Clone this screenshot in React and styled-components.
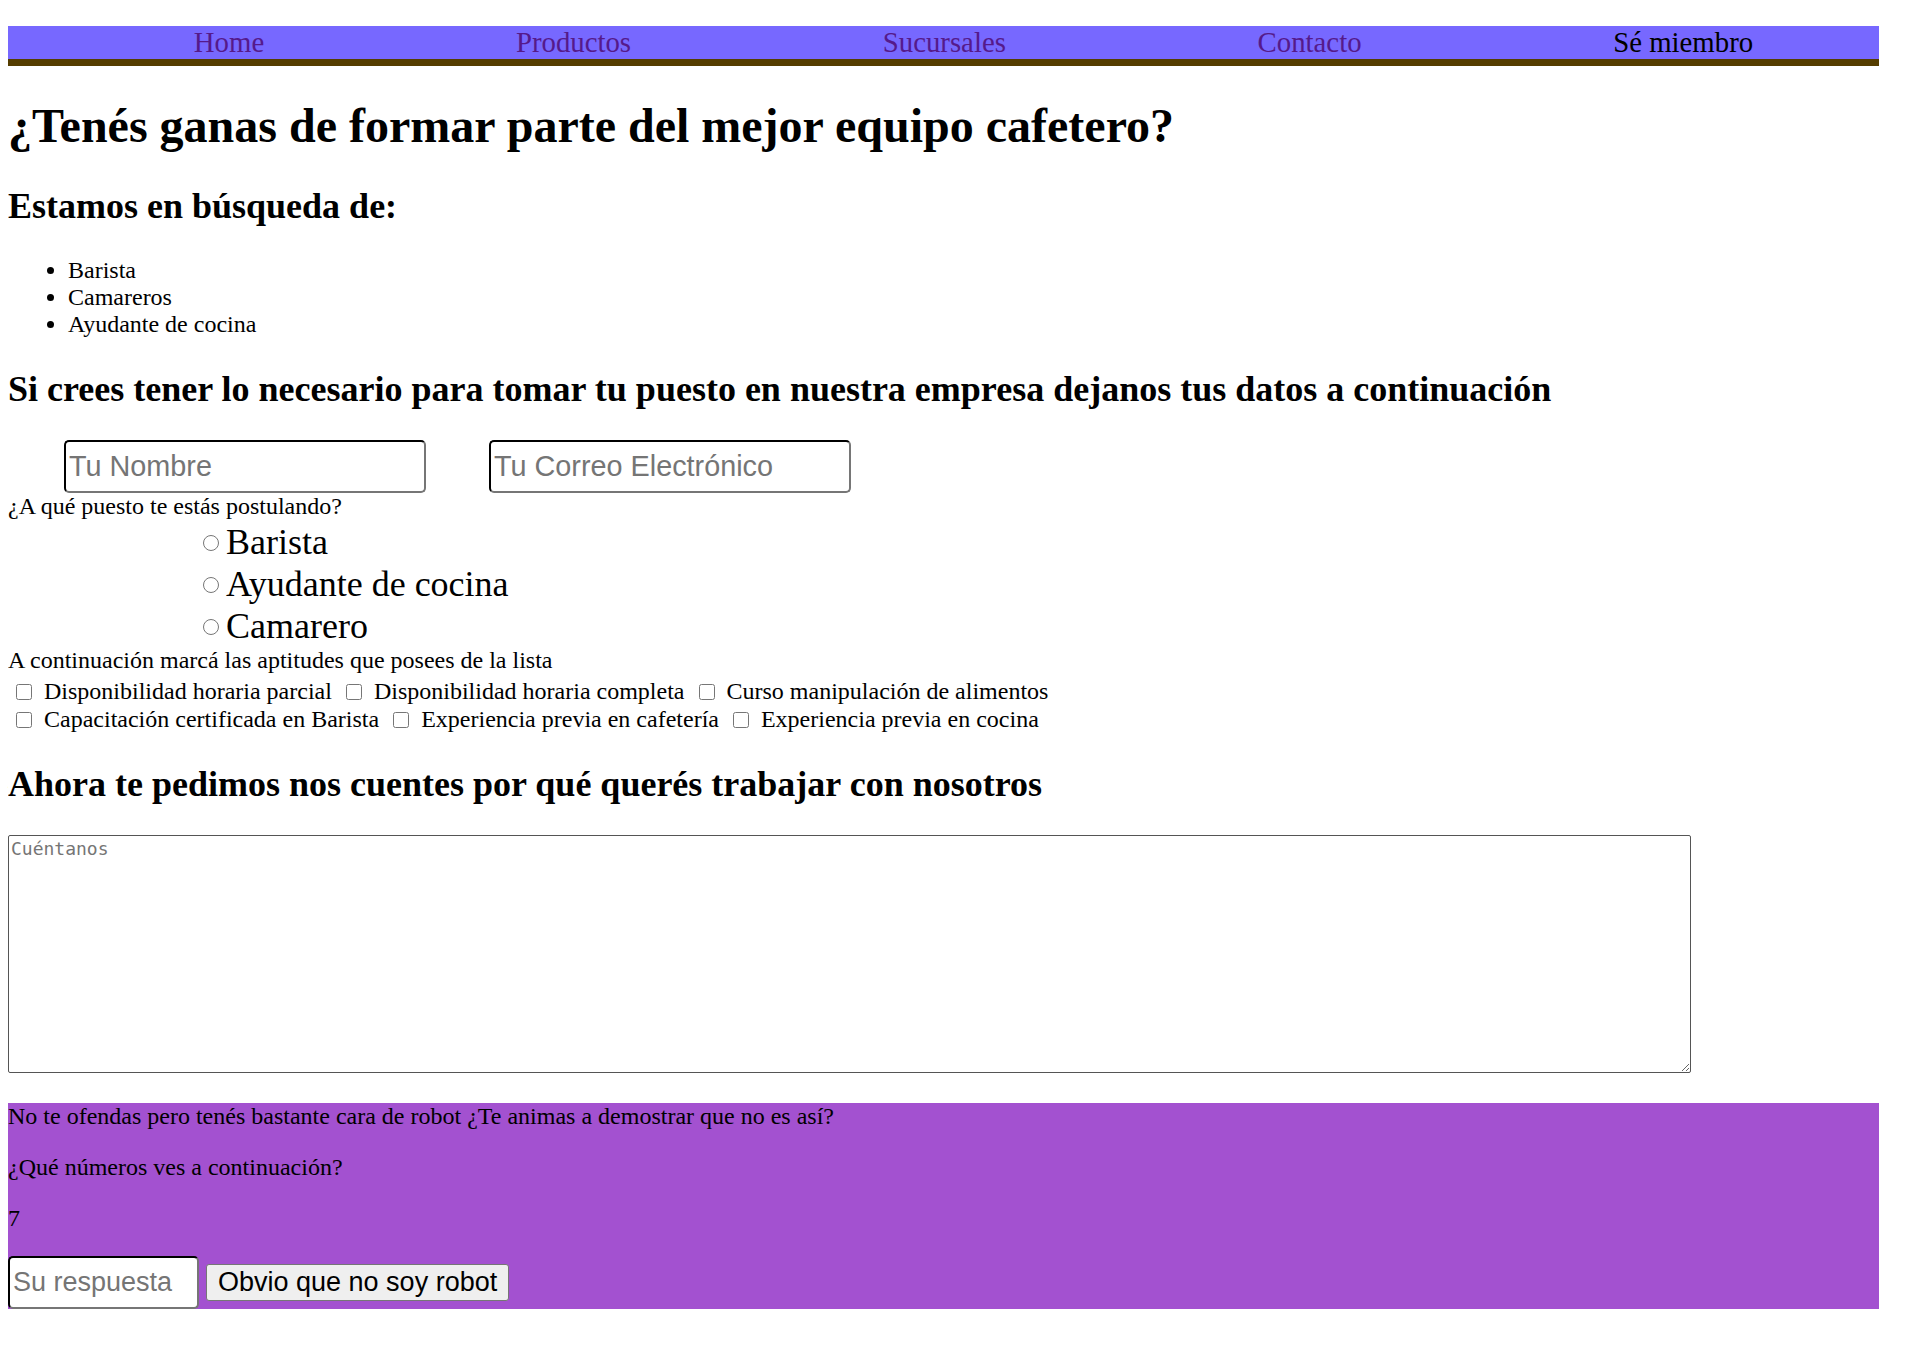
import React from "react";
import styled, { createGlobalStyle } from "styled-components";

const GlobalStyle = createGlobalStyle`
  body {
    margin: 8px;
    font-family: "Liberation Serif", "Times New Roman", serif;
    font-size: 24px;
    color: #000;
    background: #fff;
  }
`;

const Nav = styled.nav`
  display: flex;
  justify-content: space-around;
  width: 1871px;
  box-sizing: border-box;
  margin-top: 18px;
  padding-left: 60px;
  background: #7768ff;
  border-bottom: 7px solid #553d00;
  font-size: 28.8px;
  line-height: 33px;
`;

const NavLink = styled.a`
  color: ${props => (props.$plain ? "#000" : "#551a8b")};
  text-decoration: none;
`;

const Title = styled.h1`
  font-size: 48px;
  margin: 32px 0;
`;

const Subtitle = styled.h2`
  font-size: 36px;
  margin: 30px 0;
`;

const JobList = styled.ul`
  margin: 24px 0;
  padding-left: 60px;
`;

const Form = styled.form`
  margin: 0;
`;

const InputRow = styled.div`
  display: flex;
  gap: 63px;
  padding-left: 56px;
`;

const TextInput = styled.input`
  width: ${props => props.$width || "362px"};
  height: 53px;
  box-sizing: border-box;
  padding: 8px 3px;
  font-family: "Liberation Sans", Arial, sans-serif;
  font-size: ${props => props.$size || "28.8px"};
  border: 2px inset #767676;
  border-top-color: #333;
  border-left-color: #333;
  border-radius: 5px;
  background: #fff;
  &::placeholder {
    color: #757575;
  }
`;

const Question = styled.div`
  line-height: 27.6px;
`;

const RadioGroup = styled.div`
  padding-left: 190px;
`;

const RadioRow = styled.label`
  display: flex;
  align-items: center;
  height: 42px;
  font-size: 36px;
`;

const Radio = styled.input`
  width: 16px;
  height: 16px;
  margin: 3px 7px 0 5px;
`;

const CheckList = styled.div`
  padding-top: 3px;
`;

const CheckRow = styled.div`
  line-height: 28.1px;
`;

const Check = styled.input`
  width: 16px;
  height: 16px;
  margin: 3px 6px 3px 8px;
  vertical-align: -1px;
`;

const MessageBox = styled.textarea`
  width: 1683px;
  height: 238px;
  box-sizing: border-box;
  padding: 2px;
  font-family: "DejaVu Sans Mono", "Liberation Mono", monospace;
  font-size: 18px;
  border: 1px solid #555;
  border-radius: 2px;
  vertical-align: baseline;
  &::placeholder {
    color: #757575;
  }
`;

const Captcha = styled.div`
  width: 1871px;
  background: #a351d0;
`;

const CaptchaText = styled.p`
  margin: 24px 0;
`;

const AnswerRow = styled.div`
  display: flex;
  align-items: center;
  gap: 7px;
`;

const RobotButton = styled.button`
  font-family: "Liberation Sans", Arial, sans-serif;
  font-size: 27px;
  height: 37px;
  padding: 1px 11px;
  color: #000;
  background: #efefef;
  border: 1px solid #767676;
  border-radius: 3px;
`;

const links = ["Home", "Productos", "Sucursales", "Contacto"];
const skillsA = [
  "Disponibilidad horaria parcial",
  "Disponibilidad horaria completa",
  "Curso manipulación de alimentos",
];
const skillsB = [
  "Capacitación certificada en Barista",
  "Experiencia previa en cafetería",
  "Experiencia previa en cocina",
];

const App = () => {
  return (
    <>
      <GlobalStyle />
      <Nav>
        {links.map(l => (
          <NavLink key={l} href="#">
            {l}
          </NavLink>
        ))}
        <NavLink $plain>Sé miembro</NavLink>
      </Nav>
      <Title>¿Tenés ganas de formar parte del mejor equipo cafetero?</Title>
      <Subtitle>Estamos en búsqueda de:</Subtitle>
      <JobList>
        <li>Barista</li>
        <li>Camareros</li>
        <li>Ayudante de cocina</li>
      </JobList>
      <Subtitle>
        Si crees tener lo necesario para tomar tu puesto en nuestra empresa dejanos tus datos a continuación
      </Subtitle>
      <Form onSubmit={e => e.preventDefault()}>
        <InputRow>
          <TextInput type="text" placeholder="Tu Nombre" />
          <TextInput type="email" placeholder="Tu Correo Electrónico" />
        </InputRow>
        <Question>¿A qué puesto te estás postulando?</Question>
        <RadioGroup>
          <RadioRow>
            <Radio type="radio" name="puesto" />Barista
          </RadioRow>
          <RadioRow>
            <Radio type="radio" name="puesto" />Ayudante de cocina
          </RadioRow>
          <RadioRow>
            <Radio type="radio" name="puesto" />Camarero
          </RadioRow>
        </RadioGroup>
        <Question>A continuación marcá las aptitudes que posees de la lista</Question>
        <CheckList>
          <CheckRow>
            {skillsA.map(s => (
              <label key={s}>
                <Check type="checkbox" /> {s}{" "}
              </label>
            ))}
          </CheckRow>
          <CheckRow>
            {skillsB.map(s => (
              <label key={s}>
                <Check type="checkbox" /> {s}{" "}
              </label>
            ))}
          </CheckRow>
        </CheckList>
        <Subtitle>Ahora te pedimos nos cuentes por qué querés trabajar con nosotros</Subtitle>
        <div>
          <MessageBox placeholder="Cuéntanos" />
        </div>
        <Captcha>
          <CaptchaText>No te ofendas pero tenés bastante cara de robot ¿Te animas a demostrar que no es así?</CaptchaText>
          <CaptchaText>¿Qué números ves a continuación?</CaptchaText>
          <CaptchaText>7</CaptchaText>
          <AnswerRow>
            <TextInput type="text" placeholder="Su respuesta" $width="191px" $size="27px" />
            <RobotButton type="submit">Obvio que no soy robot</RobotButton>
          </AnswerRow>
        </Captcha>
      </Form>
    </>
  );
};

export default App;
